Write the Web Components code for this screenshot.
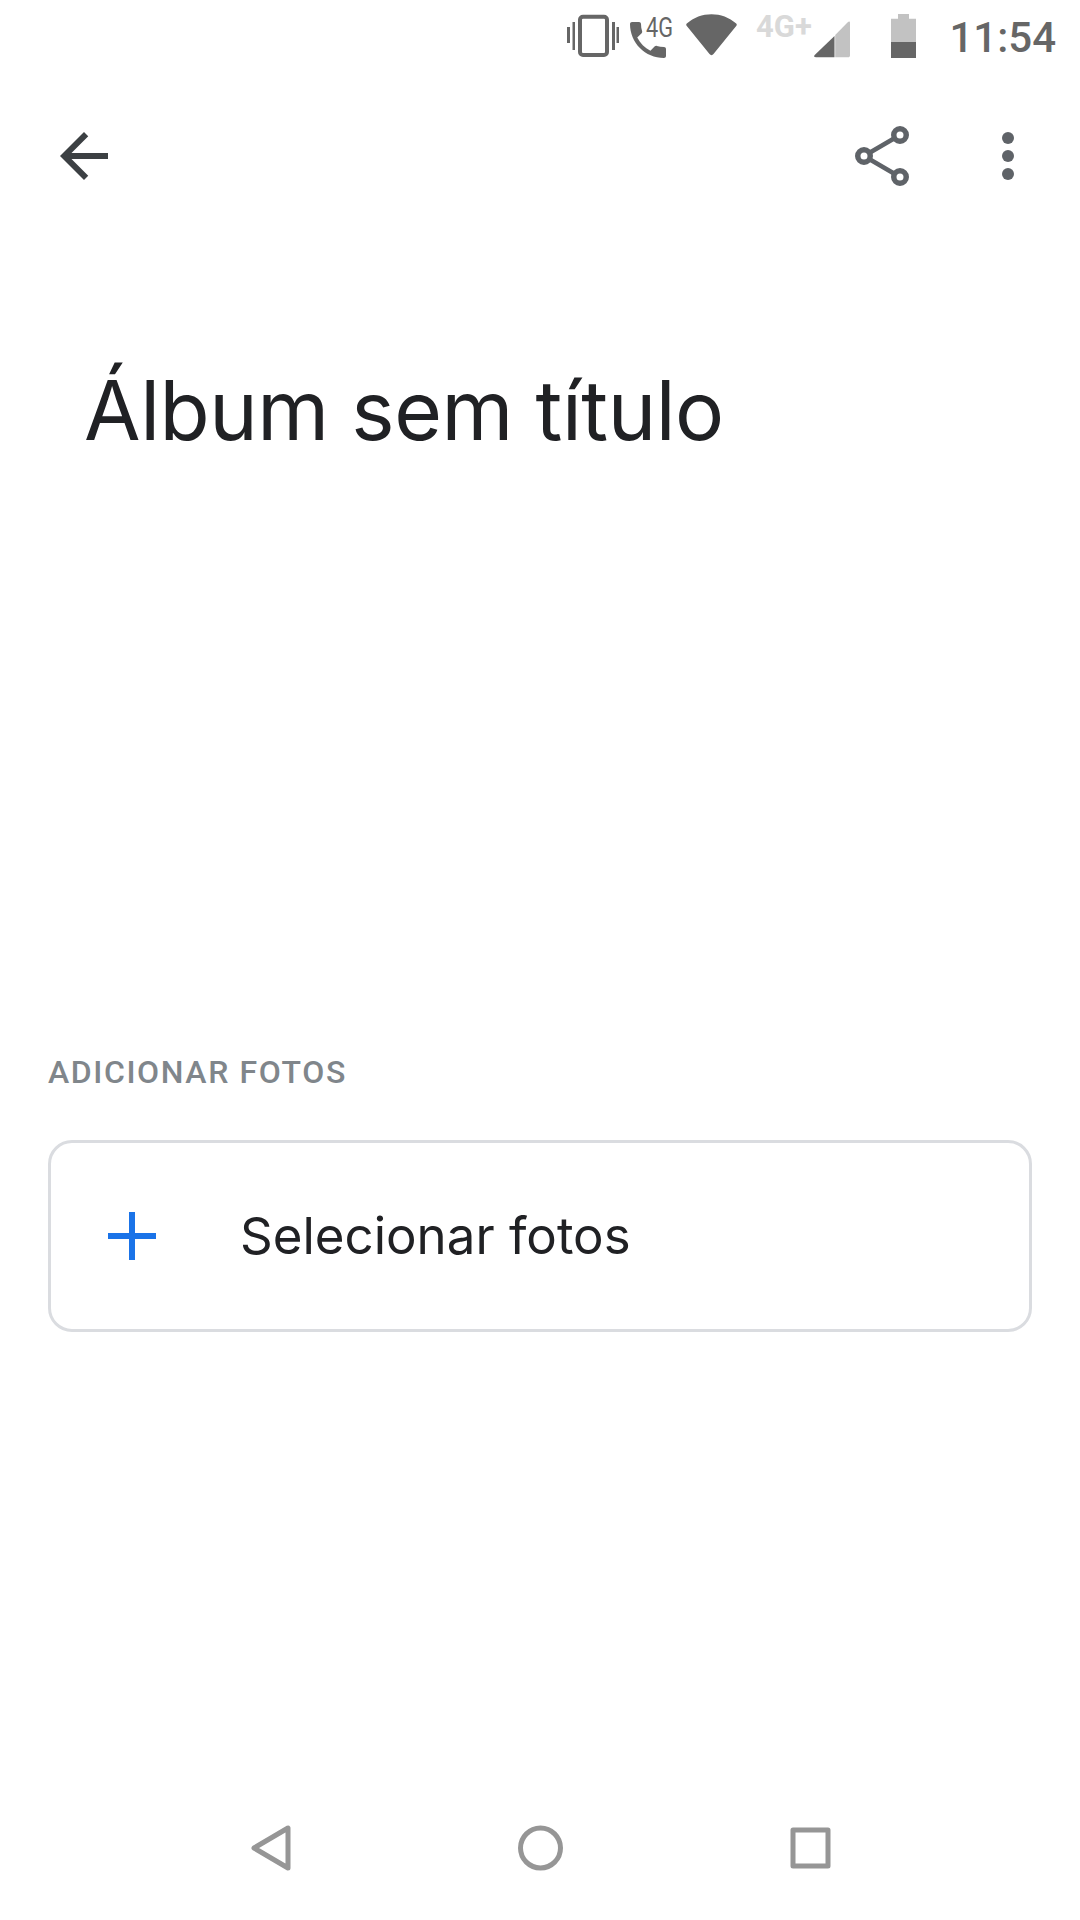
<!DOCTYPE html>
<html lang="pt">
<head>
<meta charset="utf-8">
<title>Álbum sem título</title>
<style>
html, body { margin: 0; background: #fff; }
body { width: 1080px; height: 1920px; font-family: Roboto, sans-serif; }
album-page { height: 1920px; }
</style>
</head>
<body>
<album-page>
  <status-bar></status-bar>
  <app-bar></app-bar>
  <album-title>Álbum sem título</album-title>
  <add-photos label="ADICIONAR FOTOS">Selecionar fotos</add-photos>
  <nav-bar></nav-bar>
</album-page>

<script>
class AlbumPage extends HTMLElement {
  constructor() {
    super();
    this.attachShadow({ mode: 'open' });
    this.shadowRoot.innerHTML = `
      <style>
        :host { display: flex; flex-direction: column; width: 1080px; background: #fff; overflow: hidden; }
      </style>
      <slot></slot>`;
  }
}

class StatusBar extends HTMLElement {
  constructor() {
    super();
    this.attachShadow({ mode: 'open' });
    this.shadowRoot.innerHTML = `
      <style>
        :host { display: flex; justify-content: flex-end; align-items: flex-start; height: 62px; padding-right: 24px; color: #666; }
        svg { display: block; height: 62px; fill: #666; }
        text { font-family: Roboto, sans-serif; }
        .vib { width: 53px; margin-right: 11px; }
        .call { width: 56px; }
        .wifi { width: 51px; margin-right: 19px; }
        .net { width: 95px; margin-right: 40px; }
        .bat { width: 25px; margin-right: 33px; }
        .time { font: 500 42px/62px Roboto, sans-serif; white-space: nowrap; margin-top: 7px; height: 55px; }
      </style>
      <svg class="vib" viewBox="0 -14 53 62">
        <rect x="14" y="2.700" width="27" height="38.300" rx="3" fill="none" stroke="#666" stroke-width="4"/>
        <path d="M1 13h3v16H1zM6.500 8h2.500v28H6.500zM46 8h3v28h-3zM50.500 13h2.500v16h-2.500z"/>
      </svg>
      <svg class="call" viewBox="0 -14 56 62">
        <path transform="translate(-6 2) scale(2)" d="M6.620 10.790c1.440 2.830 3.760 5.140 6.590 6.590l2.200-2.200c.27-.27.67-.36 1.020-.24 1.120.37 2.330.57 3.570.57.55 0 1 .45 1 1V20c0 .55-.45 1-1 1-9.390 0-17-7.610-17-17 0-.55.45-1 1-1h3.500c.55 0 1 .45 1 1 0 1.250.2 2.450.57 3.570.11.35.03.74-.25 1.020l-2.200 2.200z"/>
        <text x="16" y="22.700" font-size="28" textLength="27" lengthAdjust="spacingAndGlyphs">4G</text>
      </svg>
      <svg class="wifi" viewBox="0 -14 51 62">
        <path d="M.8 9.500C14.500-3 36.500-3 50.200 9.500c.7.7.7 1.500.2 2.200L27.500 40c-1.100 1.500-2.900 1.500-4 0L.6 11.700c-.5-.7-.5-1.500.2-2.200z"/>
      </svg>
      <svg class="net" viewBox="0 -14 95 62">
        <text x="0" y="23" font-size="31" font-weight="700" fill="#d9d9d9">4G+</text>
        <path d="M92 8c1-1 2-.6 2 .8V41.500c0 1-.8 1.800-1.800 1.800H79.200V21z" fill="#c2c2c2"/>
        <path d="M78.500 22V43.300H60c-1.800 0-2.500-1-1.300-2.300z"/>
      </svg>
      <svg class="bat" viewBox="0 -14 25 62">
        <path d="M7 0h11v4.700h7V28H0V4.700h7z" fill="#c2c2c2"/>
        <path d="M0 28h25v16H0z"/>
      </svg>
      <div class="time">11:54</div>`;
  }
}

class AppBar extends HTMLElement {
  constructor() {
    super();
    this.attachShadow({ mode: 'open' });
    this.shadowRoot.innerHTML = `
      <style>
        :host { display: flex; align-items: center; padding: 58px 36px 0 48px; }
        svg { display: block; width: 72px; height: 72px; }
        .back { margin-right: auto; fill: #3c4043; }
        .share { margin-right: 54px; }
        .more { fill: #5f6368; }
      </style>
      <svg class="back" viewBox="0 0 24 24"><path d="M20 11H7.830l5.590-5.590L12 4l-8 8 8 8 1.410-1.410L7.830 13H20v-2z"/></svg>
      <svg class="share" viewBox="0 0 72 72" fill="none" stroke="#5f6368" stroke-width="5.500">
        <path d="M18 36 54 15M18 36l36 21" stroke-width="4.500"/>
        <circle cx="18" cy="36" r="6.250" fill="#fff"/>
        <circle cx="54" cy="15" r="6.250" fill="#fff"/>
        <circle cx="54" cy="57" r="6.250" fill="#fff"/>
      </svg>
      <svg class="more" viewBox="0 0 72 72">
        <circle cx="36" cy="18" r="6"/>
        <circle cx="36" cy="36" r="6"/>
        <circle cx="36" cy="54" r="6"/>
      </svg>`;
  }
}

class AlbumTitle extends HTMLElement {
  constructor() {
    super();
    this.attachShadow({ mode: 'open' });
    this.shadowRoot.innerHTML = `
      <style>
        :host { display: block; padding: 169px 0 0 84px; height: 860px; box-sizing: border-box; font: 400 82px/100px Inter, Roboto, sans-serif; letter-spacing: -.45px; color: #202124; }
      </style>
      <slot></slot>`;
  }
}

class AddPhotos extends HTMLElement {
  constructor() {
    super();
    this.attachShadow({ mode: 'open' });
    this.shadowRoot.innerHTML = `
      <style>
        :host { display: block; padding: 0 48px; }
        .label { font: 500 32px/40px Roboto, sans-serif; letter-spacing: 1.6px; color: #80868b; margin-bottom: 48px; }
        .card { display: flex; align-items: center; height: 192px; box-sizing: border-box; border: 3px solid #dadce0; border-radius: 24px; padding-left: 57px; }
        svg { display: block; width: 48px; height: 48px; margin-right: 84px; }
        .text { font: 400 51px/60px Inter, Roboto, sans-serif; color: #202124; }
      </style>
      <div class="label"></div>
      <div class="card">
        <svg viewBox="0 0 48 48"><path d="M21 0h6v21h21v6H27v21h-6V27H0v-6h21z" fill="#1a73e8"/></svg>
        <div class="text"><slot></slot></div>
      </div>`;
  }
  connectedCallback() {
    this.shadowRoot.querySelector('.label').innerText = this.getAttribute('label');
  }
}

class NavBar extends HTMLElement {
  constructor() {
    super();
    this.attachShadow({ mode: 'open' });
    this.shadowRoot.innerHTML = `
      <style>
        :host { display: flex; justify-content: center; align-items: center; gap: 226px; margin-top: auto; padding-bottom: 49px; }
        svg { display: block; width: 45px; height: 46px; fill: none; stroke: #969696; stroke-width: 5; stroke-linejoin: round; }
      </style>
      <svg viewBox="0 0 45 46"><path d="M41 3v40L7 23z"/></svg>
      <svg viewBox="0 0 45 46"><circle cx="22.500" cy="23" r="20"/></svg>
      <svg viewBox="0 0 45 46"><path d="M4 5h35v36H4z"/></svg>`;
  }
}

customElements.define('album-page', AlbumPage);
customElements.define('status-bar', StatusBar);
customElements.define('app-bar', AppBar);
customElements.define('album-title', AlbumTitle);
customElements.define('add-photos', AddPhotos);
customElements.define('nav-bar', NavBar);
</script>
</body>
</html>
